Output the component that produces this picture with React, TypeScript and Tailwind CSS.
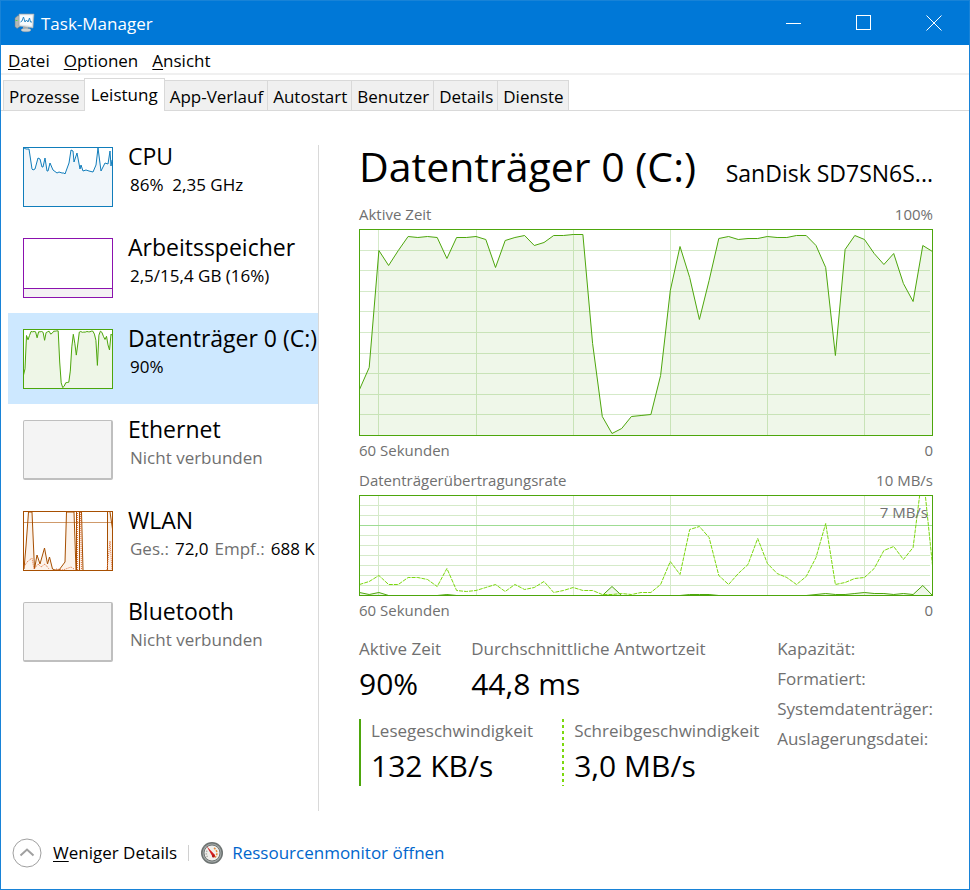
import { useState } from "react";
import type { ReactNode } from "react";

const menuItems = ["Datei", "Optionen", "Ansicht"];
const tabs = ["Prozesse", "Leistung", "App-Verlauf", "Autostart", "Benutzer", "Details", "Dienste"];
const details = ["Kapazität:", "Formatiert:", "Systemdatenträger:", "Auslagerungsdatei:"];

// y positions, one sample per second, oldest first
const activeTime = [
  160, 138, 21, 36, 21, 7, 8, 7, 8, 29, 8, 8, 7, 10, 38, 11, 8, 6, 16, 13, 6, 6, 5, 5, 114, 187, 204, 199, 187, 186,
  185, 146, 61, 17, 48, 90, 51, 9, 7, 10, 9, 9, 7, 8, 8, 6, 6, 16, 38, 126, 20, 6, 10, 24, 35, 24, 54, 72, 16, 22,
];
const writeRate = [
  89, 86, 80, 89, 89, 82, 82, 84, 91, 73, 95, 96, 95, 92, 89, 96, 89, 94, 92, 86, 97, 95, 92, 95, 95, 99, 99, 98, 99, 97,
  97, 89, 66, 79, 34, 31, 42, 80, 89, 78, 69, 43, 68, 78, 82, 89, 81, 62, 28, 89, 87, 83, 82, 73, 55, 51, 64, 52, -25, 70,
];
const readRate = [
  97, 99, 97, 100, 100, 100, 100, 100, 100, 99, 100, 100, 100, 100, 100, 100, 100, 100, 100, 100, 100, 100, 100, 100, 100, 100, 91, 100, 100, 100,
  100, 100, 100, 100, 99, 99, 99, 100, 100, 100, 100, 100, 100, 100, 100, 100, 100, 99, 98, 99, 99, 98, 97, 98, 98, 99, 98, 99, 90, 100,
];

const CHART_WIDTH = 574;
const gridColumns = [19.5, 117.5, 214.5, 311.5, 408.5, 505.5];

const toPoints = (values: number[], width = CHART_WIDTH, scale = 1) =>
  values.map((y, i) => `${((i * (width - 1)) / (values.length - 1) + 0.5).toFixed(1)},${(y * scale + 0.5).toFixed(1)}`).join(" ");

type ChartProps = {
  label: string;
  height: number;
  children: ReactNode;
};

function Chart({ label, height, children }: ChartProps) {
  const rows = Array.from({ length: 9 }, (_, i) => Math.round(((i + 1) * (height - 1)) / 10) + 0.5);

  return (
    <svg
      role="img"
      aria-label={label}
      viewBox={`0 0 ${CHART_WIDTH} ${height}`}
      preserveAspectRatio="none"
      className="block w-full"
      style={{ height }}
      fill="none"
    >
      <g stroke="#d5eac9">
        {gridColumns.map((x) => <path key={x} d={`M${x} 1V${height - 1}`} />)}
        {rows.map((y) => <path key={y} d={`M1 ${y}H${CHART_WIDTH - 3}`} />)}
      </g>
      {children}
      <rect x="0.5" y="0.5" width={CHART_WIDTH - 1} height={height - 1} stroke="#4da60c" />
    </svg>
  );
}

function CpuThumb() {
  const line =
    "1,1 3,2 6,2 9,22 10,23 12,22 15,11 17,12 19,20 20,20 22,11 24,24 25,24 27,16 30,23 34,26 36,25 39,26 41,26 42,27 46,16 48,3 50,4 51,15 54,6 57,22 58,18 60,24 63,23 66,24 70,25 73,18 75,1 78,24 80,20 82,16 85,17 87,4 88,19 89,13";
  return (
    <svg viewBox="0 0 90 60" className="h-[60px] w-[90px] shrink-0 bg-white" fill="none" stroke="#117dbb">
      <polygon points={`${line} 89,59 1,59`} fill="#f1f6fa" stroke="none" />
      <polyline points={line} />
      <rect x="0.5" y="0.5" width="89" height="59" />
    </svg>
  );
}

function MemoryThumb() {
  return (
    <svg viewBox="0 0 90 60" className="h-[60px] w-[90px] shrink-0 bg-white" fill="none" stroke="#8b12ae">
      <rect x="0.5" y="50.5" width="89" height="9" fill="#f4f2f4" />
      <rect x="0.5" y="0.5" width="89" height="59" />
    </svg>
  );
}

function DiskThumb() {
  const line = toPoints(activeTime, 90, 0.285);
  return (
    <svg viewBox="0 0 90 60" className="h-[60px] w-[90px] shrink-0 bg-white" fill="none" stroke="#4da60c">
      <polygon points={`0,60 ${line} 90,60`} fill="#eef6e7" stroke="none" />
      <polyline points={line} />
      <rect x="0.5" y="0.5" width="89" height="59" />
    </svg>
  );
}

function WlanThumb() {
  const first = "1,58 3,35 5.5,1 9,1 11.5,58 14,44 17,53 21.5,37 24.5,53 26.5,46 29.5,58 32,59 36,59 42,51 43.5,1 51,1 53,59";
  return (
    <svg viewBox="0 0 90 60" className="h-[60px] w-[90px] shrink-0 bg-white" fill="none" stroke="#a74f01">
      <polygon points={`${first} 1,59`} fill="#fcf3eb" stroke="none" />
      <path d="M55 59V1h4l1 58zM85 59V1h3l1 16v42z" fill="#fcf3eb" stroke="none" />
      <path d="M1 11.5H89" stroke="#cf9a6b" />
      <polyline points={first} />
      <path d="M53.5 1V59M56.5 1V59M58.5 1L60 59M84.5 59V1M87 1L89.5 18" />
      <path d="M1 56L4 51 9 47 11 58 15 53 18 56 22 53 26 58M33 58L40 59 48 56 51 58M54.5 59V1M57.5 1L58.5 59M84 59L87 30 89 59" stroke="#e0703a" strokeDasharray="1 1" />
      <rect x="0.5" y="0.5" width="89" height="59" />
    </svg>
  );
}

function EmptyThumb() {
  return <div className="h-[60px] w-[90px] shrink-0 rounded-xs border border-r-2 border-b-2 border-[#bfbfbf] bg-[#f4f4f4]" />;
}

type Resource = {
  name: string;
  thumb: ReactNode;
  info: ReactNode;
};

const resources: Resource[] = [
  { name: "CPU", thumb: <CpuThumb />, info: <span className="whitespace-pre">86%  2,35 GHz</span> },
  { name: "Arbeitsspeicher", thumb: <MemoryThumb />, info: "2,5/15,4 GB (16%)" },
  { name: "Datenträger 0 (C:)", thumb: <DiskThumb />, info: "90%" },
  { name: "Ethernet", thumb: <EmptyThumb />, info: <span className="text-[#707070]">Nicht verbunden</span> },
  {
    name: "WLAN",
    thumb: <WlanThumb />,
    info: (
      <span className="flex gap-[6px]">
        <span className="text-[#707070]">Ges.:</span>
        <span>72,0</span>
        <span className="text-[#707070]">Empf.:</span>
        <span>688 K</span>
      </span>
    ),
  },
  { name: "Bluetooth", thumb: <EmptyThumb />, info: <span className="text-[#707070]">Nicht verbunden</span> },
];

function AppIcon() {
  return (
    <svg viewBox="0 0 22 20" className="h-5 w-[22px]">
      <path d="M2 5l3-2.500 2 1v10l-3 2-2-2z" fill="#b4b8b6" stroke="#747b7e" strokeWidth="0.5" />
      <path d="M2.500 7.500h2" stroke="#5ed14c" />
      <path d="M10 13h5v3h-5z" fill="#aab0b2" />
      <ellipse cx="13" cy="17" rx="5" ry="1.800" fill="#cdd2d4" stroke="#8d9497" strokeWidth="0.4" />
      <path d="M6 1h15l-1 14-14-2z" fill="#dfe4e6" stroke="#9aa3a8" strokeWidth="0.6" />
      <path d="M7 2.200h12.500l-.8 10.800-11.700-1.500z" fill="#f7fbfe" />
      <path d="M7.500 9l1.500-1 1.500-4 1.500 5 1.500-2 1.500 2 1.500-4 1 4h1.500" fill="none" stroke="#2a87c4" />
    </svg>
  );
}

function GaugeIcon() {
  return (
    <svg viewBox="0 0 24 24" className="size-6">
      <circle cx="12" cy="12" r="11" fill="#6d7372" />
      <circle cx="12" cy="12" r="9.500" fill="#a3a9a8" />
      <circle cx="12" cy="12" r="8" fill="#f1f0ec" stroke="#6f7574" />
      <path d="M7.500 16a6 6 0 0 1 0-7" fill="none" stroke="#b5b5b0" strokeWidth="1.500" strokeDasharray="1.500 1" />
      <path d="M14 7a6 6 0 0 1 1 9.500" fill="none" stroke="#e98b3b" strokeWidth="1.500" strokeDasharray="2 1" />
      <path d="M6.500 5L15 14l-2 2.500z" fill="#d61f1f" />
      <circle cx="13.500" cy="15" r="1.500" fill="#b51414" />
    </svg>
  );
}

function TitleBar() {
  return (
    <header className="flex h-11 items-center bg-[#0078d7] pl-3 text-white">
      <AppIcon />
      <h1 className="ml-[6px] flex-1 pt-px text-[17px] leading-6">Task-Manager</h1>
      <button type="button" aria-label="Minimieren" className="flex h-full w-[70px] items-center justify-center">
        <svg viewBox="0 0 16 16" className="size-4" stroke="currentColor"><path d="M0 8.500H15" /></svg>
      </button>
      <button type="button" aria-label="Maximieren" className="flex h-full w-[70px] items-center justify-center">
        <svg viewBox="0 0 16 16" className="size-4" fill="none" stroke="currentColor"><rect x="0.5" y="0.5" width="14" height="14" /></svg>
      </button>
      <button type="button" aria-label="Schließen" className="flex h-full w-[70px] items-center justify-center">
        <svg viewBox="0 0 16 16" className="size-4" stroke="currentColor"><path d="M0.500 0.500L15.500 15.500M15.500 0.500L0.500 15.500" /></svg>
      </button>
    </header>
  );
}

type StatProps = {
  label: string;
  value: string;
};

function Stat({ label, value }: StatProps) {
  return (
    <div>
      <dt>{label}</dt>
      <dd className="mt-[3px] text-[30px] leading-10 text-black">{value}</dd>
    </div>
  );
}

export default function App() {
  const [tab, setTab] = useState("Leistung");
  const [selected, setSelected] = useState("Datenträger 0 (C:)");

  return (
    <div className="flex min-h-screen flex-col border border-[#1883d7] bg-white font-['Open_Sans',sans-serif] text-[17px] leading-6 text-black">
      <TitleBar />

      <nav className="flex h-[30px] items-end gap-[14px] border-b-2 border-[#f0f0f0] pl-[7px]">
        {menuItems.map((item) => (
          <button key={item} type="button">
            <span className="underline underline-offset-2">{item[0]}</span>{item.slice(1)}
          </button>
        ))}
      </nav>

      <div role="tablist" className="flex h-9 items-end border-b border-[#d9d9d9] pl-[2px]">
        {tabs.map((name) => (
          <button
            key={name}
            type="button"
            role="tab"
            aria-selected={tab === name}
            onClick={() => setTab(name)}
            className={
              tab === name
                ? "-mr-px -mb-px h-[33px] border border-b-0 border-[#d9d9d9] bg-white px-[6px]"
                : "-mr-px h-[30px] border border-b-0 border-[#d9d9d9] bg-[#f0f0f0] pt-[2px] pr-1 pl-[5px]"
            }
          >
            {name}
          </button>
        ))}
      </div>

      <div className="flex flex-1">
        <aside className="w-[317px] shrink-0 pt-5 pl-[7px]">
          {resources.map(({ name, thumb, info }) => (
            <button
              key={name}
              type="button"
              onClick={() => setSelected(name)}
              className={`flex h-[91px] w-full items-start gap-[15px] pt-4 pl-[15px] text-left ${selected === name ? "bg-[#cde8ff]" : ""}`}
            >
              {thumb}
              <span className="-mt-[7px] min-w-0 flex-1 whitespace-nowrap">
                <span className="block text-[23px] leading-8">{name}</span>
                <span className="block pl-[2px] leading-[26px]">{info}</span>
              </span>
            </button>
          ))}
        </aside>

        <main className="mt-[34px] mb-[6px] min-w-0 flex-1 border-l border-[#d9d9d9] pr-9 pl-10">
          <div className="-mt-[3px] flex items-baseline justify-between whitespace-nowrap">
            <h2 className="text-[41px] leading-12">Datenträger 0 (C:)</h2>
            <p className="text-[23px] leading-8">SanDisk SD7SN6S...</p>
          </div>

          <section className="mt-3 text-[15px] text-[#707070]">
            <div className="mb-[3px] flex justify-between">
              <span>Aktive Zeit</span>
              <span>100%</span>
            </div>
            <Chart label="Aktive Zeit" height={207}>
              <polygon points={`0.5,206 ${toPoints(activeTime)} 573.5,206`} fill="#4da60c" fillOpacity="0.09" />
              <polyline points={toPoints(activeTime)} stroke="#4da60c" />
            </Chart>
            <div className="mt-[2px] flex justify-between">
              <span>60 Sekunden</span>
              <span>0</span>
            </div>
          </section>

          <section className="mt-[6px] text-[15px] text-[#707070]">
            <div className="mb-[3px] flex justify-between">
              <span>Datenträgerübertragungsrate</span>
              <span>10 MB/s</span>
            </div>
            <div className="relative">
              <Chart label="Datenträgerübertragungsrate" height={101}>
                <path d="M1 30.500H573" stroke="#9fdc93" />
                <polygon points={`0.5,100 ${toPoints(readRate)} 573.5,100`} fill="#4da60c" fillOpacity="0.09" />
                <polyline points={toPoints(readRate)} stroke="#4da60c" />
                <polyline points={toPoints(writeRate)} stroke="#7cd80f" strokeDasharray="4 1" />
              </Chart>
              <span className="absolute top-[5px] right-[5px]">7 MB/s</span>
            </div>
            <div className="mt-[2px] flex justify-between">
              <span>60 Sekunden</span>
              <span>0</span>
            </div>
          </section>

          <section className="mt-[15px] flex justify-between text-[#707070]">
            <div>
              <dl className="flex gap-[30px]">
                <Stat label="Aktive Zeit" value="90%" />
                <Stat label="Durchschnittliche Antwortzeit" value="44,8 ms" />
              </dl>
              <div className="mt-[15px] flex gap-[29px]">
                <dl className="flex gap-[10px]">
                  <div className="w-[2px] bg-[#4da60c]" />
                  <Stat label="Lesegeschwindigkeit" value="132 KB/s" />
                </dl>
                <dl className="flex gap-[10px]">
                  <div className="w-[2px] bg-[repeating-linear-gradient(#7cd80f_0_3px,transparent_3px_6px)]" />
                  <Stat label="Schreibgeschwindigkeit" value="3,0 MB/s" />
                </dl>
              </div>
            </div>
            <ul className="-mt-[3px] leading-[30px]">
              {details.map((label) => <li key={label}>{label}</li>)}
            </ul>
          </section>
        </main>
      </div>

      <footer className="flex h-[72px] items-center pl-[11px]">
        <button type="button" className="flex items-center gap-[11px]">
          <svg viewBox="0 0 30 30" className="size-[30px]" fill="none">
            <circle cx="15" cy="15" r="14" stroke="#a0a0a0" />
            <path d="M8.500 17.500L15 11.500l6.500 6" stroke="#a0a0a0" strokeWidth="2" />
          </svg>
          <span><span className="underline underline-offset-2">W</span>eniger Details</span>
        </button>
        <div className="mx-[11px] h-4 w-px bg-[#d0d0d0]" />
        <a href="#ressourcenmonitor" className="flex items-center gap-2 text-[#0066cc]">
          <GaugeIcon />
          Ressourcenmonitor öffnen
        </a>
      </footer>
    </div>
  );
}
